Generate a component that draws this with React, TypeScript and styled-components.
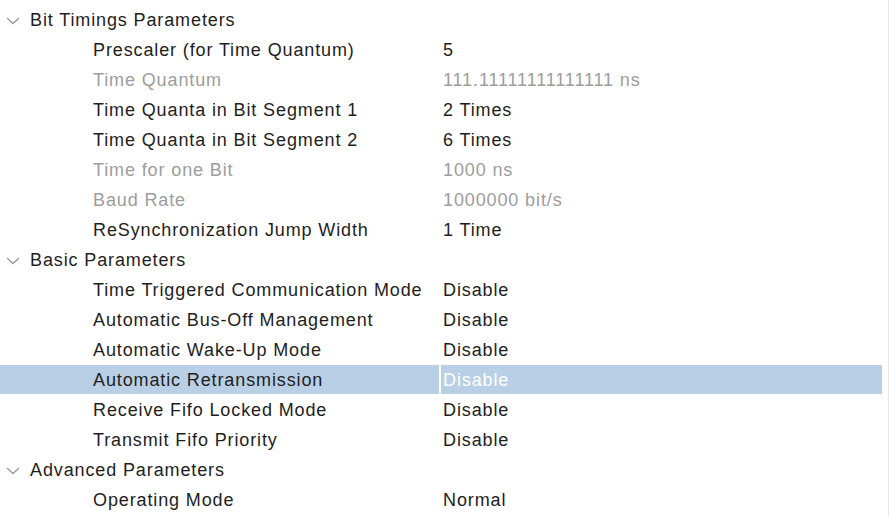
import React from "react";
import styled, { createGlobalStyle } from "styled-components";

const Global = createGlobalStyle`
  html, body { margin: 0; padding: 0; background: #fff; }
  body { font-family: "Liberation Sans", Arial, sans-serif; overflow: hidden; }
`;

const Frame = styled.div`
  width: 889px;
  height: 517px;
  display: flex;
  overflow: hidden;
  background: #fff;
`;

const Tree = styled.div`
  flex: 0 0 882px;
  padding-top: 5px;
  display: flex;
  flex-direction: column;
`;

const Edge = styled.div`
  flex: 1;
  display: flex;
  justify-content: flex-end;
`;

const EdgeLine = styled.div`
  width: 1px;
  background: #e6e6e6;
`;

const Row = styled.div`
  height: 30px;
  display: grid;
  grid-template-columns: 439px 2px 1fr;
  align-items: stretch;
  font-size: 18px;
  letter-spacing: 0.88px;
`;

const Cell = styled.div<{ $selected?: boolean; $indent: number; $muted?: boolean; $value?: boolean }>`
  display: flex;
  align-items: center;
  padding-left: ${(p) => p.$indent}px;
  padding-top: 1px;
  margin-bottom: 1px;
  background: ${(p) => (p.$selected ? "#b9cfe5" : "transparent")};
  color: ${(p) => (p.$selected && p.$value ? "#fff" : p.$muted ? "#9d9d9d" : "#1e1e1e")};
  white-space: nowrap;
`;

const Divider = styled.div`
  background: #fff;
`;

const Chevron = styled.svg`
  width: 14px;
  height: 14px;
  margin-right: 10px;
  margin-left: -24px;
  flex: 0 0 auto;
`;

type Item = { label: string; value?: string; muted?: boolean; header?: boolean; selected?: boolean };

const items: Item[] = [
  { label: "Bit Timings Parameters", header: true },
  { label: "Prescaler (for Time Quantum)", value: "5" },
  { label: "Time Quantum", value: "111.11111111111111 ns", muted: true },
  { label: "Time Quanta in Bit Segment 1", value: "2 Times" },
  { label: "Time Quanta in Bit Segment 2", value: "6 Times" },
  { label: "Time for one Bit", value: "1000 ns", muted: true },
  { label: "Baud Rate", value: "1000000 bit/s", muted: true },
  { label: "ReSynchronization Jump Width", value: "1 Time" },
  { label: "Basic Parameters", header: true },
  { label: "Time Triggered Communication Mode", value: "Disable" },
  { label: "Automatic Bus-Off Management", value: "Disable" },
  { label: "Automatic Wake-Up Mode", value: "Disable" },
  { label: "Automatic Retransmission", value: "Disable", selected: true },
  { label: "Receive Fifo Locked Mode", value: "Disable" },
  { label: "Transmit Fifo Priority", value: "Disable" },
  { label: "Advanced Parameters", header: true },
  { label: "Operating Mode", value: "Normal" },
];

export default function App() {
  return (
    <Frame>
      <Global />
      <Tree>
        {items.map((it, i) =>
          it.header ? (
            <Row key={i}>
              <Cell $indent={30}>
                <Chevron viewBox="0 0 14 14">
                  <path d="M1 5 L7 10.5 L13 5" fill="none" stroke="#999" strokeWidth="1.3" />
                </Chevron>
                {it.label}
              </Cell>
              <Divider />
              <Cell $indent={0} />
            </Row>
          ) : (
            <Row key={i}>
              <Cell $indent={93} $muted={it.muted} $selected={it.selected}>
                {it.label}
              </Cell>
              <Divider />
              <Cell $indent={2} $muted={it.muted} $selected={it.selected} $value>
                {it.value}
              </Cell>
            </Row>
          )
        )}
      </Tree>
      <Edge>
        <EdgeLine />
      </Edge>
    </Frame>
  );
}
